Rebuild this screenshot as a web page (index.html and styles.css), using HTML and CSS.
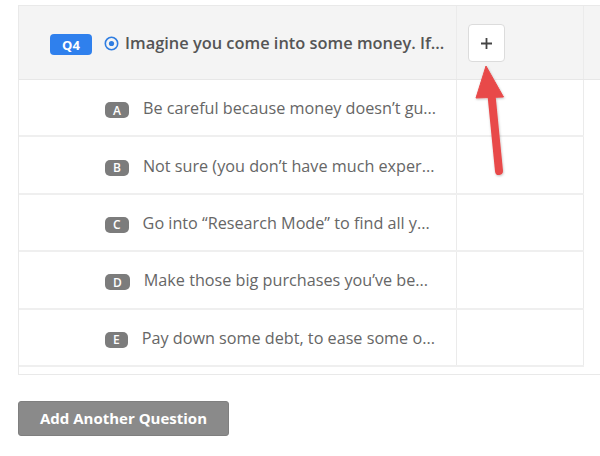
FILE: index.html
```html
<!DOCTYPE html>
<html>
<head>
<meta charset="utf-8">
<link rel="stylesheet" href="styles.css">
</head>
<body>
<div class="page">
  <div class="table">
    <div class="head">
      <div class="cell q-cell">
        <span class="qbadge">Q4</span>
        <svg class="radio" width="15" height="15" viewBox="0 0 15 15"><circle cx="7.5" cy="7.5" r="6.2" fill="none" stroke="#2f7de1" stroke-width="1.6"/><circle cx="7.5" cy="7.5" r="2.6" fill="#2f7de1"/></svg>
        <span class="qtext">Imagine you come into some money. If...</span>
      </div>
      <div class="cell act-cell">
        <button class="plus"><svg width="13" height="13" viewBox="0 0 13 13"><path d="M6.5 1v11M1 6.5h11" stroke="#444" stroke-width="1.8"/></svg></button>
      </div>
      <div class="cell rest"></div>
    </div>
    <div class="row"><div class="cell opt"><span class="lbadge">A</span><span class="otext">Be careful because money doesn’t gu...</span></div><div class="cell act"></div></div>
    <div class="row"><div class="cell opt"><span class="lbadge">B</span><span class="otext">Not sure (you don’t have much exper...</span></div><div class="cell act"></div></div>
    <div class="row"><div class="cell opt"><span class="lbadge">C</span><span class="otext">Go into “Research Mode” to find all y...</span></div><div class="cell act"></div></div>
    <div class="row"><div class="cell opt"><span class="lbadge">D</span><span class="otext">Make those big purchases you’ve be...</span></div><div class="cell act"></div></div>
    <div class="row"><div class="cell opt"><span class="lbadge">E</span><span class="otext">Pay down some debt, to ease some o...</span></div><div class="cell act"></div></div>
  </div>
  <button class="add">Add Another Question</button>
</div>
<svg class="arrow" width="600" height="456" viewBox="0 0 600 456">
  <defs><filter id="sh" x="-50%" y="-50%" width="200%" height="200%"><feDropShadow dx="0.5" dy="1" stdDeviation="1" flood-color="#000" flood-opacity="0.25"/></filter></defs>
  <g filter="url(#sh)" fill="#e84a4a" stroke="#e84a4a">
    <line x1="491.5" y1="95" x2="499" y2="171" stroke-width="8" stroke-linecap="round"/>
    <polygon points="486,66 503.5,97 476,98" stroke-width="1" stroke-linejoin="round"/>
  </g>
</svg>
</body>
</html>
```

FILE: styles.css
```css
* { box-sizing: border-box; }
body {
  margin: 0;
  background: #fff;
  font-family: "Open Sans", "Liberation Sans", sans-serif;
  width: 600px;
  height: 456px;
  overflow: hidden;
  position: relative;
}
.page {
  padding: 5px 0 0 18px;
}
.table {
  width: 582px;
  border-top: 1px solid #e9e9e9;
  border-left: 1px solid #e9e9e9;
  border-bottom: 1px solid #e9e9e9;
  padding-bottom: 7px;
}
.head {
  display: grid;
  grid-template-columns: 438px 127px 1fr;
  height: 74px;
  background: #f4f4f4;
  border-bottom: 1px solid #e7e7e7;
}
.cell {
  display: flex;
  align-items: center;
  border-right: 1px solid #ebebeb;
}
.cell.rest { border-right: none; }
.q-cell {
  padding-left: 31px;
}
.qbadge {
  display: inline-flex;
  align-items: center;
  justify-content: center;
  width: 42px;
  height: 21px;
  background: #2f80ed;
  color: #fff;
  font-size: 13px;
  font-weight: 700;
  border-radius: 4px;
  margin-top: 4px;
}
.radio {
  margin-left: 12px;
  margin-top: 1px;
}
.qtext {
  margin-left: 6px;
  font-size: 16.4px;
  font-weight: 600;
  color: #555;
  white-space: nowrap;
}
.act-cell {
  padding-left: 11px;
}
.plus {
  width: 37px;
  height: 38px;
  background: #fff;
  border: 1px solid #dcdcdc;
  border-radius: 4px;
  display: flex;
  align-items: center;
  justify-content: center;
  padding: 0;
  margin-top: 1px;
}
.row {
  display: grid;
  grid-template-columns: 438px 127px;
  height: 57.4px;
  border-bottom: 2px solid #efefef;
  width: 565px;
}
.opt {
  padding-left: 86px;
  padding-top: 5px;
}
.lbadge {
  display: inline-flex;
  align-items: center;
  justify-content: center;
  height: 16px;
  padding: 0 8px;
  background: #7c7c7c;
  color: #fff;
  font-size: 12px;
  font-weight: 600;
  border-radius: 5px;
  margin-right: 14px;
}
.otext {
  font-size: 16.2px;
  color: #666;
  white-space: nowrap;
  margin-top: -4px;
}
.add {
  margin-top: 26px;
  width: 211px;
  height: 35px;
  background: #8a8a8a;
  color: #fff;
  border: 1px solid #7f7f7f;
  border-radius: 3px;
  font-family: "Open Sans", "Liberation Sans", sans-serif;
  font-size: 15px;
  font-weight: 700;
  padding: 0;
}
.arrow {
  position: absolute;
  left: 0;
  top: 0;
  pointer-events: none;
}
```
